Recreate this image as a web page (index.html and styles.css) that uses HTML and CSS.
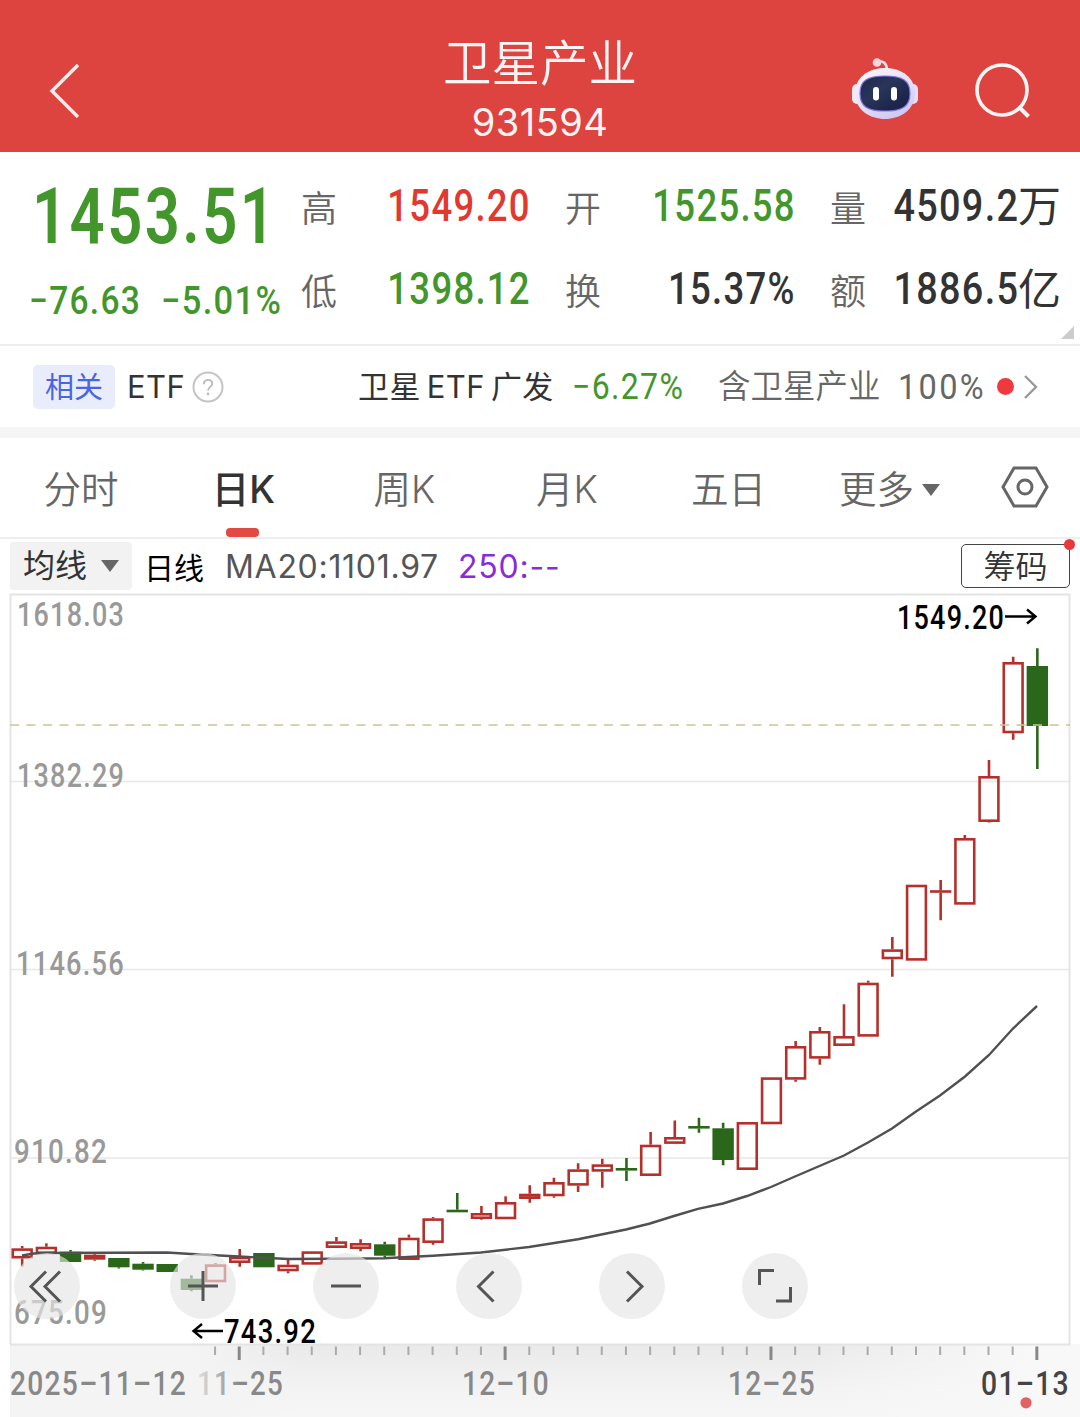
FILE: index.html
```html
<!DOCTYPE html>
<html lang="zh-CN">
    <head>
        <meta charset="utf-8">
        <title>卫星产业 931594</title>
        <link rel="stylesheet" href="styles.css">
    </head>

    <body>
        <div class="header">
            <svg class="back" width="34" height="60" viewBox="0 0 34 60">
                <path d="M31 4 L5 30 L31 56" fill="none" stroke="#ffeceb" stroke-width="3.4"/>
            </svg>
            <div class="title">
                <div class="name">卫星产业</div>
                <div class="code">931594</div>
            </div>
            <div class="actions">
                <svg width="70" height="64" viewBox="0 0 70 64">
                    <defs>
                        <linearGradient id="shell" x1="0" y1="0" x2="0.6" y2="1">
                            <stop offset="0" stop-color="#fff4f6"/>
                            <stop offset="0.55" stop-color="#e6e3fa"/>
                            <stop offset="1" stop-color="#cfc8f4"/>
                        </linearGradient>
                        <linearGradient id="face" x1="0" y1="0" x2="1" y2="1">
                            <stop offset="0" stop-color="#20284f"/>
                            <stop offset="0.4" stop-color="#29355b"/>
                            <stop offset="1" stop-color="#151d42"/>
                        </linearGradient>
                    </defs>
                    <path d="M27 5.500 Q36 4 37 13" fill="none" stroke="#fbdfe3" stroke-width="2.6"/>
                    <circle cx="27" cy="6.500" r="4.300" fill="#fbd5db"/>
                    <rect x="2" y="28" width="10" height="20" rx="5" fill="#f6e8f2"/>
                    <rect x="58" y="28" width="10" height="20" rx="5" fill="#e4dff8"/>
                    <path d="M35 12 C52 12 65 22 65 37 C65 54 50 63 35 63 C20 63 5 54 5 37 C5 22 18 12 35 12 Z" fill="url(#shell)"/>
                    <path d="M35 20 C53 20 60 25 60 37.500 C60 50 53 55 35 55 C17 55 10 50 10 37.500 C10 25 17 20 35 20 Z" fill="url(#face)" stroke="#8273dc" stroke-width="1.2"/>
                    <rect x="23" y="31" width="6" height="13.500" rx="3" fill="#fff"/>
                    <rect x="41" y="31" width="6" height="13.500" rx="3" fill="#fff"/>
                </svg>
                <svg width="60" height="60" viewBox="0 0 60 60">
                    <circle cx="30" cy="30" r="25" fill="none" stroke="#fff4f3" stroke-width="3.6"/>
                    <path d="M46.500 46.500 L56.500 56.500" stroke="#fff4f3" stroke-width="4"/>
                </svg>
            </div>
        </div>

        <div class="quote">
            <div class="price">
                <div class="last"><span class="num">1453.51</span></div>
                <div class="change">
                    <span class="num">−76.63</span>
                    <span class="num">−5.01%</span>
                </div>
            </div>
            <div class="stats">
                <div class="stat"><label>高</label><b class="up"><span class="num">1549.20</span></b></div>
                <div class="stat"><label>开</label><b class="down"><span class="num">1525.58</span></b></div>
                <div class="stat wide"><label>量</label><b><span class="num">4509.2</span><i>万</i></b></div>
                <div class="stat"><label>低</label><b class="down"><span class="num">1398.12</span></b></div>
                <div class="stat"><label>换</label><b><span class="num">15.37%</span></b></div>
                <div class="stat wide"><label>额</label><b><span class="num">1886.5</span><i>亿</i></b></div>
            </div>
            <div class="corner"></div>
        </div>

        <div class="related">
            <span class="tag">相关</span>
            <span class="etf">ETF</span>
            <svg class="help" width="32" height="32" viewBox="0 0 32 32">
                <circle cx="16" cy="16" r="14.500" fill="none" stroke="#c4c4c4" stroke-width="2"/>
                <path d="M11.800 13.200 C11.800 7.500 20.200 7.500 20.200 12.800 C20.200 15.800 16 16 16 19.500" fill="none" stroke="#bbb" stroke-width="1.900"/>
                <circle cx="16" cy="23" r="1.400" fill="#bbb"/>
            </svg>
            <span class="fund"><span>卫星</span><span>ETF</span><span>广发</span></span>
            <span class="fundchange"><span class="num">−6.27%</span></span>
            <span class="holds">含卫星产业</span>
            <span class="weight"><span class="num">100%</span></span>
            <span class="dot"></span>
            <svg class="more" width="14" height="26" viewBox="0 0 14 26">
                <path d="M1 2 L12 13 L1 24" fill="none" stroke="#999" stroke-width="2.400"/>
            </svg>
        </div>

        <div class="tabs">
            <div class="tab">分时</div>
            <div class="tab active">日K</div>
            <div class="tab">周K</div>
            <div class="tab">月K</div>
            <div class="tab">五日</div>
            <div class="tab">更多<span class="caret"></span></div>
            <svg class="settings" width="48" height="44" viewBox="0 0 48 44">
                <path d="M13 3 H35 L46 22 L35 41 H13 L2 22 Z" fill="none" stroke="#666" stroke-width="3"/>
                <circle cx="24" cy="22" r="7" fill="none" stroke="#666" stroke-width="3"/>
            </svg>
        </div>

        <div class="legend">
            <div class="select">均线<span class="caret"></span></div>
            <span class="period">日线</span>
            <span class="ma20">MA20:1101.97</span>
            <span class="ma250">250:--</span>
            <div class="chips">筹码</div>
        </div>

        <div class="chart">
            <svg width="1080" height="825" viewBox="0 592 1080 825">
                <defs>
                    <linearGradient id="axisbg" x1="0" y1="0" x2="0" y2="1">
                        <stop offset="0" stop-color="#e9e9e9"/>
                        <stop offset="0.6" stop-color="#f3f3f3"/>
                        <stop offset="1" stop-color="#f6f6f6"/>
                    </linearGradient>
                    <linearGradient id="axisfade" x1="0" y1="0" x2="1" y2="0">
                        <stop offset="0" stop-color="#f4f4f4"/>
                        <stop offset="0.17" stop-color="#f4f4f4"/>
                        <stop offset="0.27" stop-color="#f4f4f4" stop-opacity="0"/>
                        <stop offset="0.75" stop-color="#f8f8f8" stop-opacity="0"/>
                        <stop offset="0.95" stop-color="#f8f8f8"/>
                        <stop offset="1" stop-color="#f8f8f8"/>
                    </linearGradient>
                    <linearGradient id="datefade" gradientUnits="userSpaceOnUse" x1="198" y1="0" x2="240" y2="0">
                        <stop offset="0" stop-color="#dedede"/>
                        <stop offset="1" stop-color="#888"/>
                    </linearGradient>
                </defs>
                <rect x="10" y="1344" width="1070" height="73" fill="url(#axisbg)"/>
                <rect x="10" y="1344" width="1070" height="73" fill="url(#axisfade)"/>
                <path class="grid" d="M11 781.500 H1069 M11 969.500 H1069 M11 1158 H1069"/>
                <path class="frame" d="M10.500 1344 V594.500 H1069.500 V1344.500 H10"/>

                <g class="scale">
                    <text x="17" y="626" textLength="108" lengthAdjust="spacingAndGlyphs">1618.03</text>
                    <text x="17" y="787" textLength="108" lengthAdjust="spacingAndGlyphs">1382.29</text>
                    <text x="16" y="975" textLength="109" lengthAdjust="spacingAndGlyphs">1146.56</text>
                    <text x="14" y="1163" textLength="94" lengthAdjust="spacingAndGlyphs">910.82</text>
                    <text x="14" y="1324" textLength="94" lengthAdjust="spacingAndGlyphs">675.09</text>
                </g>

                <g id="candles"></g>
                <polyline class="ma" points="22,1255.500 34,1253.500 46,1253 167,1252.500 191,1254 239,1256.500 288,1259 336,1258.800 384,1258.200 408,1257 433,1255.800 481,1252.500 529,1247 578,1239.300 626,1229.500 650,1223.500 674,1216 698,1208.800 723,1203.500 747,1196 771,1187 795,1176.500 844,1155.500 868,1142.500 892,1128.500 916,1111.500 940,1095.500 965,1076.500 989,1055 1013,1028.500 1037,1006"/>
                <path class="lastline" d="M10 725 H1070"/>

                <g class="mark">
                    <text x="897" y="628.500" textLength="108" lengthAdjust="spacingAndGlyphs">1549.20</text>
                    <path d="M1005 616.500 H1035 M1027 609.500 L1035.500 616.500 L1027 623.500"/>
                    <text x="224" y="1342.500" textLength="93" lengthAdjust="spacingAndGlyphs">743.92</text>
                    <path d="M223 1331 H194 M202 1324 L193.500 1331 L202 1338"/>
                </g>

                <g id="ticks"></g>
                <g class="dates">
                    <text x="10" y="1394.500" textLength="177" lengthAdjust="spacingAndGlyphs">2025–11–12</text>
                    <text x="197" y="1394.500" textLength="87" lengthAdjust="spacingAndGlyphs" fill="url(#datefade)">11–25</text>
                    <text x="462" y="1394.500" textLength="88" lengthAdjust="spacingAndGlyphs">12–10</text>
                    <text x="728" y="1394.500" textLength="88" lengthAdjust="spacingAndGlyphs">12–25</text>
                    <text x="981" y="1394.500" textLength="89" lengthAdjust="spacingAndGlyphs" class="today">01–13</text>
                </g>
                <circle cx="1026" cy="1402.800" r="5.600" fill="#e06262"/>
            </svg>

            <div class="tools">
                <div class="tool"><svg viewBox="0 0 66 66"><path d="M32 18.500 L17 33.500 L32 48.500 M46 18.500 L31 33.500 L46 48.500"/></svg></div>
                <div class="tool"><svg viewBox="0 0 66 66"><path d="M18 33 H48 M33 18 V48"/></svg></div>
                <div class="tool"><svg viewBox="0 0 66 66"><path d="M18 33 H48"/></svg></div>
                <div class="tool"><svg viewBox="0 0 66 66"><path d="M37.500 18.500 L22.500 33.500 L37.500 48.500"/></svg></div>
                <div class="tool"><svg viewBox="0 0 66 66"><path d="M28 18.500 L43 33.500 L28 48.500"/></svg></div>
                <div class="tool"><svg viewBox="0 0 66 66"><path d="M17.500 32 V17.500 H32 M34 48 H48.500 V34"/></svg></div>
            </div>
        </div>

        <script src="chart.js"></script>
    </body>
</html>
```
FILE: styles.css
```css
html {
    font-family: Inter, "Noto Sans CJK SC", sans-serif;
}

body {
    margin: 0;
    width: 1080px;
    height: 1417px;
    background: #fff;
    color: #333;
    overflow: hidden;
}

/* Condensed figures */
.num {
    display: inline-block;
    font-family: Roboto, sans-serif;
    font-weight: 500;
    letter-spacing: 1.5px;
    transform: scaleX(0.83);
    transform-origin: right center;
    white-space: nowrap;
}

.header {
    display: grid;
    grid-template-columns: 360px 360px 360px;
    height: 152px;
    background: #dd443f;
    color: #fff4f3;
}

.back {
    margin-top: 61px;
    margin-left: 47px;
}

.title {
    text-align: center;
}

.name {
    margin-top: 23px;
    font-family: "Noto Sans CJK SC", sans-serif;
    font-size: 48.5px;
    font-weight: 350;
    line-height: 74px;
}

.code {
    margin-top: 1px;
    font-size: 38px;
    font-weight: 370;
    letter-spacing: 0.5px;
    line-height: 48px;
}

.actions {
    display: flex;
    gap: 52px;
    padding-top: 56px;
    padding-left: 130px;
}

.actions svg + svg {
    margin-top: 4px;
}

.quote {
    position: relative;
    display: flex;
    height: 194px;
    border-bottom: 2px solid #eee;
    box-sizing: border-box;
}

.price {
    width: 301px;
    color: #43962b;
}

.price .num {
    transform-origin: left center;
}

.last {
    margin-top: 22px;
    margin-left: 32px;
    height: 82px;
    font-size: 77px;
    line-height: 82px;
}

.last .num {
    font-weight: 600;
    letter-spacing: 3px;
    transform: scaleX(0.8);
}

.change {
    display: flex;
    margin-top: 22px;
    margin-left: 29px;
    font-size: 39px;
    line-height: 46px;
}

.change .num {
    width: 132px;
    transform: scaleX(0.86);
}

.change .num + .num {
    transform: scaleX(0.885);
}

.stats {
    display: grid;
    grid-template-columns: 229px 230px 230px;
    grid-auto-rows: 83px;
    column-gap: 35px;
    padding-top: 13px;
}

.stat {
    display: flex;
    justify-content: space-between;
    font-size: 44px;
    line-height: 83px;
}

.stat label {
    color: #666;
    font-family: "Noto Sans CJK SC", sans-serif;
    font-size: 36px;
    font-weight: 350;
}

.stat b {
    display: flex;
    margin-right: -1px;
    font-weight: 500;
}

.stat i {
    margin-left: -1px;
    font-family: "Noto Sans CJK SC", sans-serif;
    font-size: 43px;
    font-style: normal;
    font-weight: 400;
    line-height: 77px;
}

.wide .num {
    transform: scaleX(0.86);
}

.up {
    color: #e0392f;
}

.down {
    color: #43962b;
}

.corner {
    position: absolute;
    right: 6px;
    bottom: 5px;
    border-left: 13px solid transparent;
    border-bottom: 13px solid #ccc;
}

.related {
    display: flex;
    align-items: center;
    height: 81px;
    padding-left: 33px;
    border-bottom: 11px solid #f5f5f5;
    font-size: 31px;
    line-height: 44px;
}

.tag {
    width: 82px;
    height: 44px;
    border-radius: 5px;
    background: #e9ecfb;
    color: #4965e0;
    font-size: 29px;
    line-height: 45px;
    text-align: center;
}

.etf {
    width: 64px;
    margin-left: 12px;
    letter-spacing: 0.4px;
}

.help {
    margin-left: 1px;
}

.fund {
    display: flex;
    gap: 6px;
    width: 214px;
    margin-left: 134px;
    letter-spacing: 0.4px;
}

.fundchange {
    width: 146px;
    color: #43962b;
    font-size: 36px;
}

.fundchange .num,
.weight .num {
    font-weight: 400;
    transform: scaleX(0.89);
    transform-origin: left center;
}

.holds {
    width: 180px;
    color: #666;
    font-size: 32.5px;
    font-weight: 350;
}

.weight {
    width: 99px;
    color: #666;
    font-size: 35px;
}

.weight .num {
    letter-spacing: 2.5px;
    transform: scaleX(0.93);
}

.dot {
    width: 17px;
    height: 17px;
    border-radius: 50%;
    background: #ee3a3f;
}

.more {
    margin-left: 10px;
}

.tabs {
    display: grid;
    grid-template-columns: 162px 163px 159px 166px 157px 165px 108px;
    height: 99px;
    border-bottom: 2px solid #eee;
    color: #666;
    font-size: 37.5px;
    line-height: 98px;
}

.tab {
    display: flex;
    justify-content: center;
    align-items: center;
    padding-top: 4px;
    height: 95px;
    font-weight: 350;
}

.active {
    position: relative;
    color: #333;
    font-weight: 500;
}

.active::after {
    content: "";
    position: absolute;
    left: 64px;
    bottom: 0;
    width: 33px;
    height: 9px;
    border-radius: 4px;
    background: #e04a42;
}

.caret {
    margin-left: 8px;
    border: 9px solid transparent;
    border-top: 12px solid #666;
    border-bottom: 0;
}

.settings {
    margin-top: 27px;
    margin-left: 29px;
}

.legend {
    display: flex;
    align-items: center;
    height: 53px;
    padding-left: 10px;
    padding-right: 10px;
    font-size: 31px;
}

.select {
    display: flex;
    align-items: center;
    width: 109px;
    height: 48px;
    padding-left: 13px;
    border-radius: 4px;
    background: #f2f2f2;
    font-size: 32px;
    line-height: 50px;
}

.select .caret {
    margin-left: 14px;
}

.period {
    width: 81px;
    margin-left: 12px;
    color: #000;
    font-size: 30px;
}

.ma20 {
    width: 233px;
    padding-top: 1px;
    color: #555;
    font-size: 32px;
    font-weight: 400;
    letter-spacing: 0.7px;
}

.ma250 {
    padding-top: 1px;
    color: #8a2bd8;
    font-size: 32px;
    letter-spacing: 0.8px;
}

.chips {
    position: relative;
    width: 107px;
    height: 42px;
    margin-left: auto;
    border: 1px solid #444;
    border-radius: 5px;
    font-size: 32px;
    font-weight: 350;
    line-height: 44px;
    text-align: center;
}

.chips::after {
    content: "";
    position: absolute;
    top: -6px;
    right: -6px;
    width: 11px;
    height: 11px;
    border-radius: 50%;
    background: #e8383d;
}

.chart {
    position: relative;
    height: 825px;
}

.chart svg {
    display: block;
}

.chart text {
    font-family: Roboto, sans-serif;
    font-size: 33px;
    font-weight: 500;
    letter-spacing: 1.5px;
}

.grid {
    fill: none;
    stroke: #e8e8e8;
    stroke-width: 1.5;
}

.frame {
    fill: none;
    stroke: #e4e4e4;
    stroke-width: 2;
}

.scale {
    fill: #999;
}

.red {
    fill: none;
    stroke: #b5302a;
    stroke-width: 2.6;
}

.green {
    fill: #2a671b;
    stroke: #2a671b;
    stroke-width: 2.6;
}

.ma {
    fill: none;
    stroke: #505050;
    stroke-width: 2.4;
}

.lastline {
    fill: none;
    stroke: #cdc394;
    stroke-width: 1.6;
    stroke-dasharray: 9 7.5;
}

.mark {
    fill: #000;
}

.mark path {
    fill: none;
    stroke: #000;
    stroke-width: 2.4;
}

.tick {
    stroke: #aaa;
    stroke-width: 2;
}

.tick.major {
    stroke: #888;
    stroke-width: 3;
}

.dates {
    fill: #888;
}

.dates .today {
    fill: #444;
}

.tools {
    position: absolute;
    top: 661px;
    left: 14px;
    display: flex;
    gap: 77px;
}

.tool {
    width: 66px;
    height: 66px;
    border-radius: 50%;
    background: rgba(229, 229, 229, 0.65);
}

.tool:first-child {
    margin-right: 12.5px;
}

.tool path {
    fill: none;
    stroke: #555;
    stroke-width: 3;
}
```
FILE: chart.js
```js
// Each candle: color, body top, body bottom, wick top, wick bottom
var candles = [
    ["red", 1248.3, 1258.5, 1246, 1266.5],
    ["red", 1246.7, 1254, 1243.3, 1254],
    ["green", 1251.7, 1262, 1250, 1262],
    ["red", 1254.7, 1259.7, 1253, 1260.7],
    ["green", 1258, 1267.3, 1258, 1268.5],
    ["green", 1263.7, 1269.7, 1262, 1270.5],
    ["green", 1264, 1272, 1264, 1272],
    ["green", 1278.7, 1290, 1275.3, 1291.3],
    ["red", 1264.3, 1282.3, 1263, 1282.3],
    ["red", 1256.7, 1263, 1249, 1266.7],
    ["green", 1253, 1267.3, 1253, 1267.3],
    ["red", 1264.7, 1271.3, 1260, 1273.3],
    ["red", 1251.3, 1264.7, 1251.3, 1264.7],
    ["red", 1241.3, 1248, 1237, 1248],
    ["red", 1243, 1249, 1239.3, 1251.3],
    ["green", 1244.3, 1255.7, 1241.7, 1257.3],
    ["red", 1237.7, 1260, 1234.7, 1260],
    ["red", 1218.3, 1243, 1217, 1244.7],
    ["green", 1209.7, 1212.3, 1193, 1212.3],
    ["red", 1213, 1219, 1206, 1219.7],
    ["red", 1202, 1219.3, 1196.3, 1219.3],
    ["red", 1193.7, 1199, 1185.3, 1202.7],
    ["red", 1182, 1196.3, 1177.7, 1197.7],
    ["red", 1169.3, 1185.7, 1163.3, 1192],
    ["red", 1164.3, 1171.7, 1158.7, 1187.7],
    ["green", 1168, 1170.5, 1158, 1181],
    ["red", 1144.7, 1176, 1132, 1176],
    ["red", 1137, 1143.9, 1120.5, 1143.9],
    ["green", 1126, 1128.5, 1117.7, 1132.7],
    ["green", 1128.3, 1160, 1122.7, 1165.3],
    ["red", 1122, 1170, 1122, 1170],
    ["red", 1077.3, 1124.3, 1077.3, 1124.3],
    ["red", 1046, 1079.7, 1041, 1081.7],
    ["red", 1031, 1058.7, 1027, 1064.7],
    ["red", 1036, 1046, 1004.3, 1046],
    ["red", 982.7, 1036.7, 980.7, 1036.7],
    ["red", 949.3, 959.3, 937, 976.7],
    ["red", 884.7, 960.7, 884.7, 960.7],
    ["red", 890.2, 892.8, 880, 920.3],
    ["red", 838, 904.7, 835, 904.7],
    ["red", 776, 822, 760, 822.5],
    ["red", 662, 733.3, 656.7, 739.7],
    ["green", 666, 726, 648.3, 769]
];

var firstX = 22.2;
var step = 24.17;
var body = "";
var ticks = "";

for (var i = 0; i < candles.length; i++) {
    var c = candles[i];
    var x = firstX + i * step;
    var height = Math.max(c[2] - c[1] - 2.6, 0.01);

    body += '<g class="' + c[0] + '">';
    body += '<rect x="' + (x - 9.4) + '" y="' + (c[1] + 1.3) + '" width="18.8" height="' + height + '"/>';
    body += '<path d="M' + x + ' ' + c[3] + ' V' + c[1] + ' M' + x + ' ' + c[2] + ' V' + c[4] + '"/>';
    body += '</g>';

    // Ticks start after the first date label
    if (i >= 8) {
        var major = (i - 9) % 11 == 0;
        ticks += '<path class="tick' + (major ? ' major' : '') + '" d="M' + (x - 0.5) + ' 1346.5 V' + (major ? 1360 : 1355) + '"/>';
    }
}

document.getElementById("candles").innerHTML = body;
document.getElementById("ticks").innerHTML = ticks;
```
